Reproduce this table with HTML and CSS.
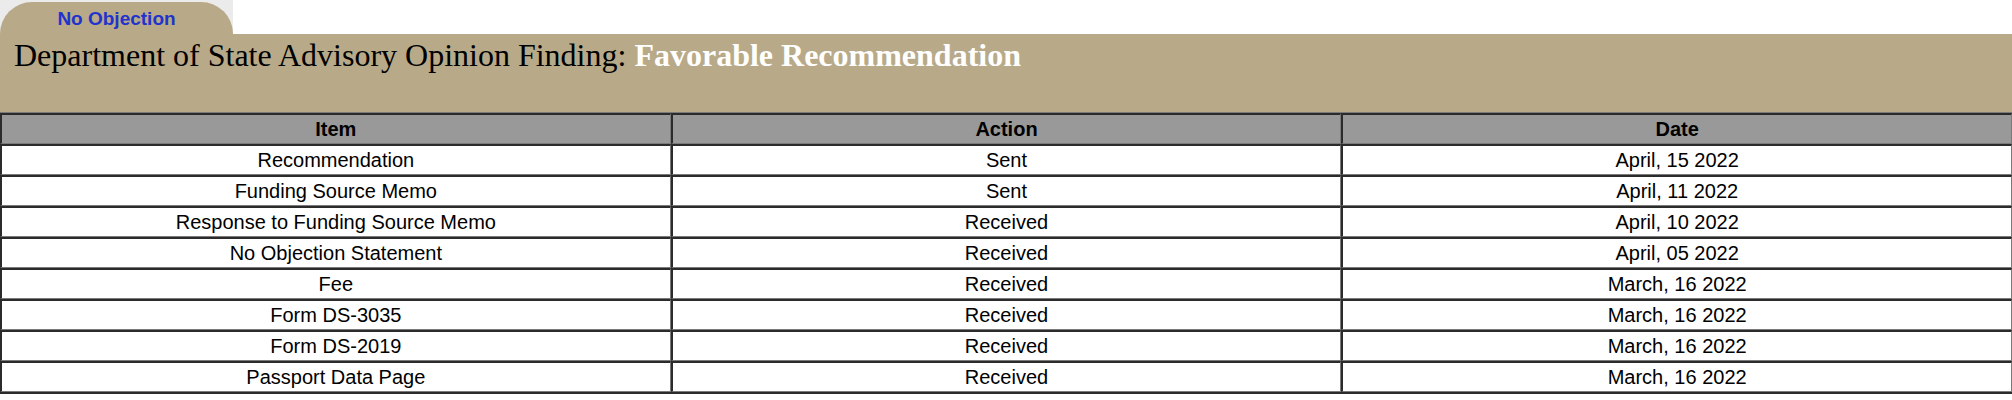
FILE: index.html
```html
<!DOCTYPE html>
<html>
<head>
<meta charset="utf-8">
<link rel="stylesheet" href="styles.css">
</head>
<body>
<div class="tabrow">
  <div class="tabslot"><div class="tab">No Objection</div></div>
</div>
<div class="band">
  <h1 class="finding">Department of State Advisory Opinion Finding: <span class="verdict">Favorable Recommendation</span></h1>
</div>
<table class="status">
  <thead>
    <tr><th>Item</th><th>Action</th><th>Date</th></tr>
  </thead>
  <tbody>
    <tr><td>Recommendation</td><td>Sent</td><td>April, 15 2022</td></tr>
    <tr><td>Funding Source Memo</td><td>Sent</td><td>April, 11 2022</td></tr>
    <tr><td>Response to Funding Source Memo</td><td>Received</td><td>April, 10 2022</td></tr>
    <tr><td>No Objection Statement</td><td>Received</td><td>April, 05 2022</td></tr>
    <tr><td>Fee</td><td>Received</td><td>March, 16 2022</td></tr>
    <tr><td>Form DS-3035</td><td>Received</td><td>March, 16 2022</td></tr>
    <tr><td>Form DS-2019</td><td>Received</td><td>March, 16 2022</td></tr>
    <tr><td>Passport Data Page</td><td>Received</td><td>March, 16 2022</td></tr>
  </tbody>
</table>
</body>
</html>
```
FILE: styles.css
```css
html, body {
  margin: 0;
  padding: 0;
  background: #ffffff;
}
.tabrow {
  display: flex;
  height: 34px;
}
.tabslot {
  width: 233px;
  background: #ebebeb;
  padding-top: 2px;
  box-sizing: border-box;
  display: flex;
}
.tab {
  flex: 1;
  background: #b8aa88;
  border-radius: 50px 50px 0 0;
  text-align: center;
  font-family: "Liberation Sans", Arial, sans-serif;
  font-weight: bold;
  font-size: 19px;
  color: #2233cc;
  line-height: 24px;
  padding-top: 5px;
  box-sizing: border-box;
}
.band {
  background: #b8aa88;
  height: 78px;
  padding: 5px 0 0 14px;
  box-sizing: border-box;
}
.finding {
  margin: 0;
  font-family: "Liberation Serif", "Times New Roman", serif;
  font-weight: normal;
  font-size: 32px;
  color: #000;
  line-height: 32px;
}
.verdict {
  font-weight: bold;
  color: #ffffff;
}
.status {
  width: 100%;
  border-collapse: separate;
  border-spacing: 0;
  table-layout: fixed;
  border-top: 1px solid #7a7a7a;
  border-bottom: 2px solid #2b2b2b;
  background: #2b2b2b;
  font-family: "Liberation Sans", Arial, sans-serif;
  font-size: 20px;
  color: #000;
}
.status th, .status td {
  text-align: center;
  padding: 0;
  height: 28px;
  line-height: 23px;
  border-top: 2px solid #2b2b2b;
  border-left: 2px solid #2b2b2b;
  border-bottom: 1px solid #7a7a7a;
  border-right: 1px solid #7a7a7a;
}
.status th {
  background: #999999;
  font-weight: bold;
}
.status td {
  background: #ffffff;
}
```
